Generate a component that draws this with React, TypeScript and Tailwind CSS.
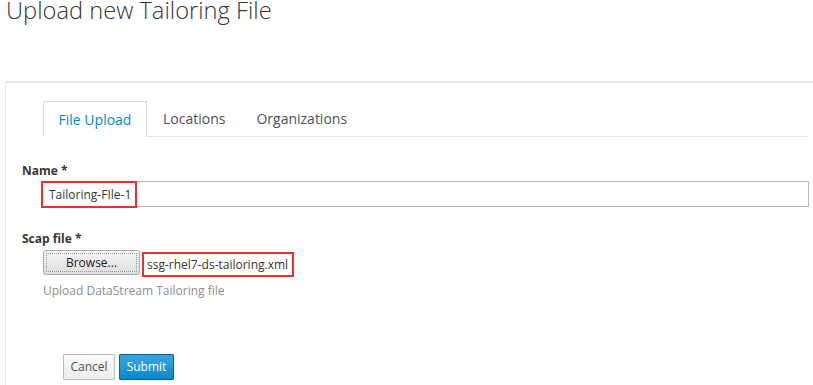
export default function App() {
  return (
    <div
      className="h-[385px] w-[813px] overflow-hidden bg-white text-[#363636]"
      style={{ fontFamily: '"Open Sans", "Noto Sans", sans-serif' }}
    >
      <h1 className="-mt-[5px] pl-[6px] text-[23.7px] font-light leading-[30px] text-[#363636]">
        Upload new Tailoring File
      </h1>

      <div className="ml-[5px] mt-[56px] h-[320px] border-l border-t-2 border-[#e8e8e8] pl-[16px] pt-[18px]">
        {/* tabs */}
        <div className="ml-[21px] mr-[4px] flex border-b border-[#e3e3e3] text-[14px]">
          <div className="-mb-px flex h-[36px] w-[104px] items-center justify-center border border-b-white border-[#dcdcdc] bg-white text-[#0088ce]">
            File Upload
          </div>
          <div className="flex h-[35px] items-center px-[16px] text-[#4d5258]">Locations</div>
          <div className="flex h-[35px] items-center px-[15px] text-[#4d5258]">Organizations</div>
        </div>

        {/* name */}
        <div className="mt-[25px] text-[12px] font-bold leading-[17px]">Name *</div>
        <div className="relative ml-[19px] mr-[4px] mt-[2px] h-[26px] border border-[#bbbbbb] bg-white">
          <div className="absolute -left-px -top-px flex h-[27px] w-[96px] items-center border-2 border-[#ef2e2e] pl-[6px] text-[12px] text-[#363636]">
            Tailoring-FIle-1
          </div>
        </div>

        {/* scap file */}
        <div className="mt-[23px] text-[12px] font-bold leading-[17px]">Scap file *</div>
        <div className="ml-[21px] mt-[3px] flex items-start gap-[2px]">
          <div className="flex h-[25px] w-[97px] items-center justify-center rounded-[3px] border border-[#a9a9a9] bg-gradient-to-b from-[#f6f6f6] to-[#dedede] p-[2px]">
            <div className="flex h-full w-full items-center justify-center border border-dotted border-[#999] text-[12px] text-[#222]">
              Browse...
            </div>
          </div>
          <div className="mt-[2px] flex h-[25px] w-[152px] items-center border-2 border-[#ef2e2e] pl-[3px] text-[12px] text-[#363636]">
            ssg-rhel7-ds-tailoring.xml
          </div>
        </div>
        <div className="ml-[21px] mt-[5px] text-[12px] leading-[17px] text-[#8b8d8f]">
          Upload DataStream Tailoring file
        </div>

        {/* actions */}
        <div className="ml-[41px] mt-[55px] flex gap-[4px] text-[12px]">
          <button className="h-[26px] w-[52px] rounded-[1px] border border-[#bbbbbb] bg-gradient-to-b from-[#fafafa] to-[#ededed] text-[#4d5258]">
            Cancel
          </button>
          <button className="h-[26px] w-[55px] rounded-[1px] border border-[#00659c] bg-gradient-to-b from-[#39a5dc] to-[#0088ce] text-white">
            Submit
          </button>
        </div>
      </div>
    </div>
  );
}
